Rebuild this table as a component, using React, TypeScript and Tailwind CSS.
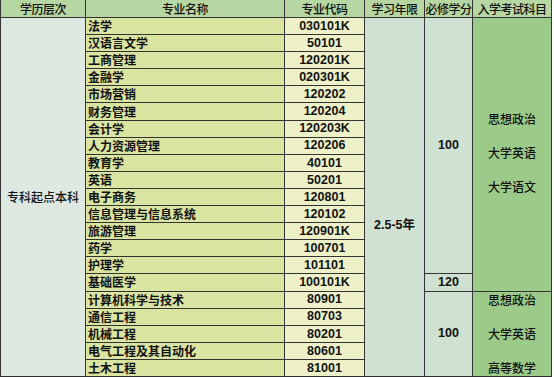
const majors = [
  ["法学", "030101K"],
  ["汉语言文学", "50101"],
  ["工商管理", "120201K"],
  ["金融学", "020301K"],
  ["市场营销", "120202"],
  ["财务管理", "120204"],
  ["会计学", "120203K"],
  ["人力资源管理", "120206"],
  ["教育学", "40101"],
  ["英语", "50201"],
  ["电子商务", "120801"],
  ["信息管理与信息系统", "120102"],
  ["旅游管理", "120901K"],
  ["药学", "100701"],
  ["护理学", "101101"],
  ["基础医学", "100101K"],
  ["计算机科学与技术", "80901"],
  ["通信工程", "80703"],
  ["机械工程", "80201"],
  ["电气工程及其自动化", "80601"],
  ["土木工程", "81001"],
];

const cjk = "font-['Noto_Sans_CJK_SC','Noto_Sans_CJK_JP',sans-serif]";
const num = "font-['Liberation_Sans','Noto_Sans_CJK_SC',sans-serif] font-bold";

const headers = ["学历层次", "专业名称", "专业代码", "学习年限", "必修学分", "入学考试科目"];

const App = () => {
  return (
    <div className="w-[554px] h-[378px] bg-white overflow-hidden">
      <div
        className={`grid w-[552px] h-[377px] grid-cols-[84px_198px_79px_59px_47px_78px] grid-rows-[17px_repeat(21,minmax(0,1fr))] gap-px bg-[#333333] px-px pb-px text-[12px] text-[#111] font-medium ${cjk}`}
      >
        {headers.map((h) => (
          <div key={h} className="bg-[#b6d6a2] flex items-center justify-center leading-none whitespace-nowrap tracking-[-0.5px]">
            {h}
          </div>
        ))}

        {majors.map(([name, code], i) => (
          <div key={code} className="contents">
            {i === 0 && (
              <div className="row-span-21 bg-[#dce8e0] flex items-center justify-center">专科起点本科</div>
            )}
            <div className="bg-[#d9e5a1] flex items-center pl-[2px] leading-none font-semibold whitespace-nowrap">
              {name}
            </div>
            <div className={`bg-[#eef1c7] flex items-center justify-center leading-none ${num} text-[12.5px]`}>
              {code}
            </div>
            {i === 0 && (
              <>
                <div className="row-span-21 bg-[#cfe1d0] flex items-center justify-center">
                  <span className={`mt-[56px] ${num} text-[12.5px]`}>2.5-5年</span>
                </div>
                <div className="row-span-15 bg-[#cfe1d0] flex items-center justify-center">
                  <span className={`${num} text-[12.5px]`}>100</span>
                </div>
                <div className="row-span-16 bg-[#9ccb89] flex flex-col items-center justify-center gap-[17px] pb-[4px]">
                  <span className="leading-[17px]">思想政治</span>
                  <span className="leading-[17px]">大学英语</span>
                  <span className="leading-[17px]">大学语文</span>
                </div>
              </>
            )}
            {i === 15 && (
              <div className="bg-[#cfe1d0] flex items-center justify-center">
                <span className={`${num} text-[12.5px]`}>120</span>
              </div>
            )}
            {i === 16 && (
              <>
                <div className="row-span-5 bg-[#cfe1d0] flex items-center justify-center">
                  <span className={`${num} text-[12.5px]`}>100</span>
                </div>
                <div className="row-span-5 bg-[#9ccb89] flex flex-col items-center justify-center gap-[17px]">
                  <span className="leading-[17px]">思想政治</span>
                  <span className="leading-[17px]">大学英语</span>
                  <span className="leading-[17px]">高等数学</span>
                </div>
              </>
            )}
          </div>
        ))}
      </div>
    </div>
  );
};

export default App;
